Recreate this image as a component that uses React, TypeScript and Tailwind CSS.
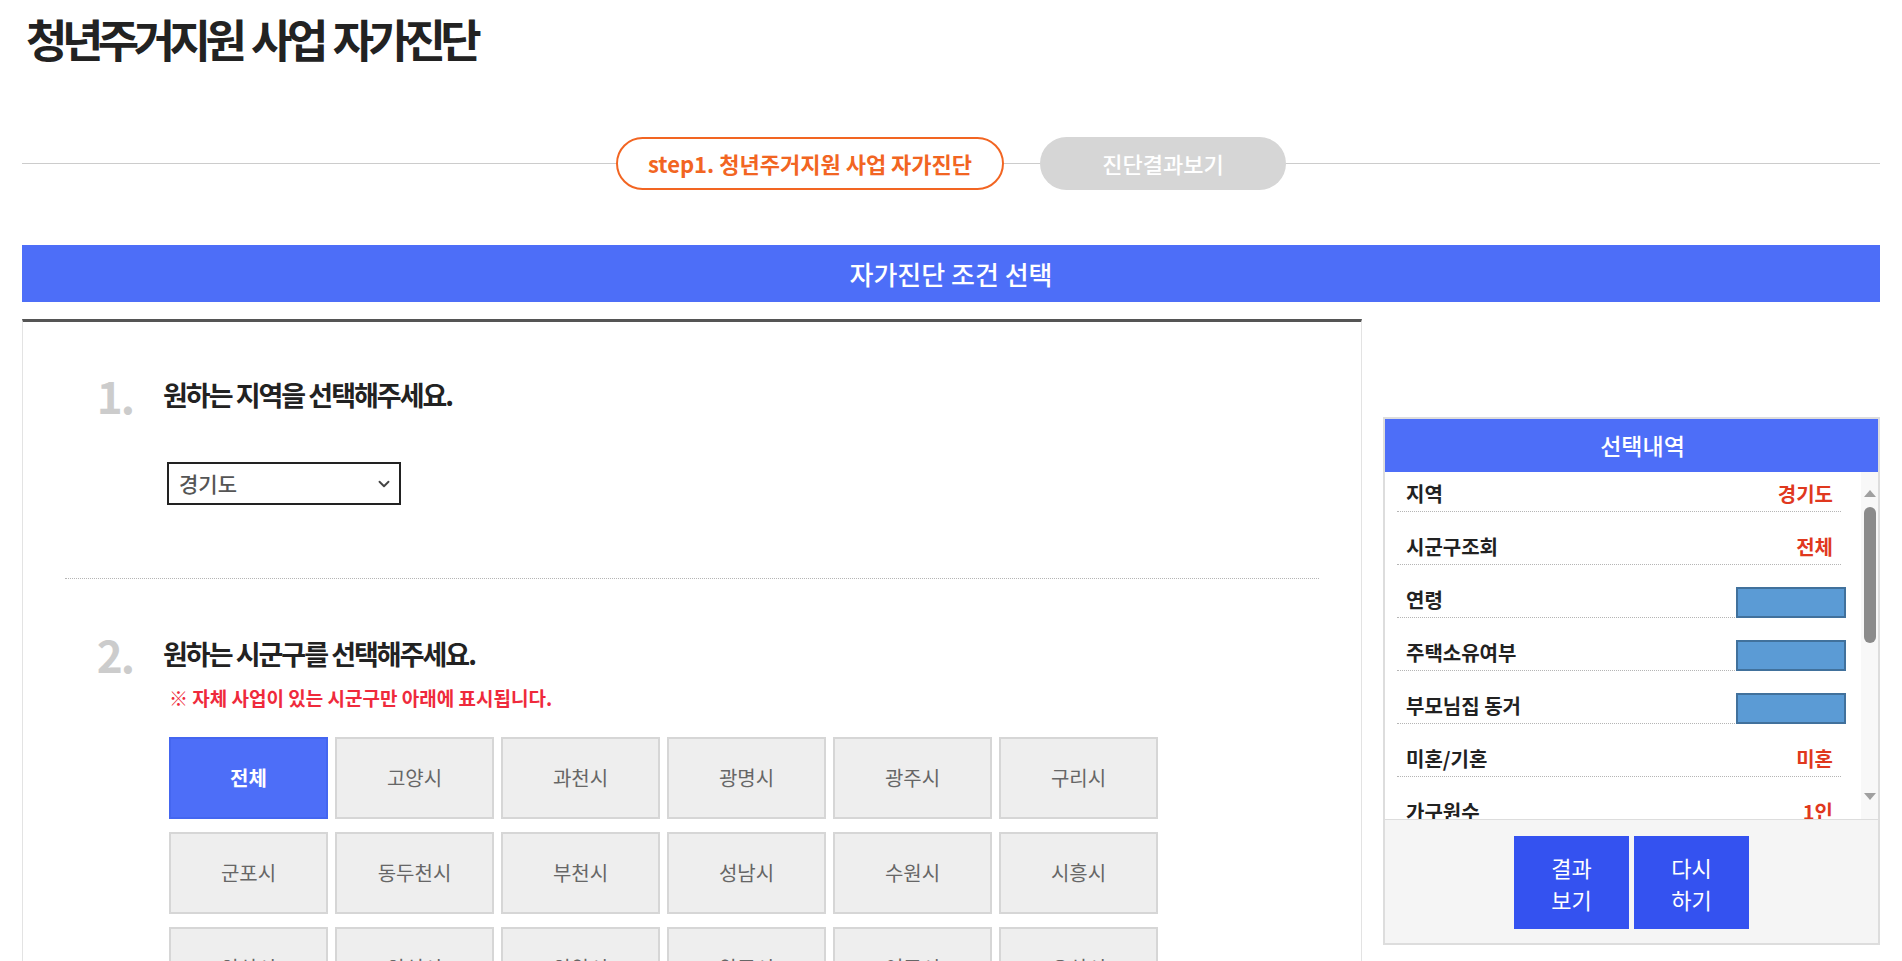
import React from 'react';
import { ChevronDown } from 'lucide-react';

const cities = [
  '전체', '고양시', '과천시', '광명시', '광주시', '구리시',
  '군포시', '동두천시', '부천시', '성남시', '수원시', '시흥시',
  '안산시', '안성시', '안양시', '양주시', '여주시', '오산시',
];

type Row = { label: string; value?: string; box?: boolean };
const rows: Row[] = [
  { label: '지역', value: '경기도' },
  { label: '시군구조회', value: '전체' },
  { label: '연령', box: true },
  { label: '주택소유여부', box: true },
  { label: '부모님집 동거', box: true },
  { label: '미혼/기혼', value: '미혼' },
  { label: '가구원수', value: '1인' },
  { label: '소득', value: '-' },
];

export default function App() {
  return (
    <div className="min-h-screen bg-white text-[#222] font-['Noto_Sans_CJK_KR','Noto_Sans',sans-serif]">
      <div className="px-[22px]">
        {/* Title */}
        <h1 className="pt-[13px] pl-[4px] text-[45px] leading-[52px] font-bold tracking-[-5.5px] [word-spacing:5px] text-[#222]">
          청년주거지원 사업 자가진단
        </h1>

        {/* Steps */}
        <div className="mt-[72px] flex h-[53px] items-center">
          <div className="h-px flex-1 bg-[#cccccc]" />
          <div className="flex h-[53px] w-[388px] items-center justify-center rounded-full border-2 border-[#f26522] bg-white text-[22px] font-bold text-[#f26522]">
            step1. 청년주거지원 사업 자가진단
          </div>
          <div className="h-px w-[36px] bg-[#cccccc]" />
          <div className="flex h-[53px] w-[246px] items-center justify-center rounded-full bg-[#d6d6d6] text-[22px] font-medium text-white">
            진단결과보기
          </div>
          <div className="h-px flex-1 bg-[#cccccc]" />
        </div>

        {/* Blue bar */}
        <div className="mt-[55px] flex h-[57px] items-center justify-center bg-[#4d6ef8] text-[26px] font-medium text-white">
          자가진단 조건 선택
        </div>

        {/* Panels */}
        <div className="mt-[17px] flex items-start gap-[21px]">
          {/* Left panel */}
          <div className="w-[1340px] border-x border-t-[3px] border-x-[#e3e3e3] border-t-[#555555] pb-[60px]">
            {/* Section 1 */}
            <div className="mx-[42px] border-b border-dotted border-[#b5b5b5] pb-[73px] pt-[49px]">
              <div className="flex h-[48px] items-center">
                <div className="w-[68px] text-right text-[44px] font-bold leading-[48px] tracking-[-2px] text-[#cccccc]">1.</div>
                <div className="ml-[30px] text-[27px] font-bold tracking-[-2px] text-[#222]">원하는 지역을 선택해주세요.</div>
              </div>
              <div className="ml-[102px] mt-[43px] flex h-[43px] w-[234px] items-center justify-between border-2 border-[#222] bg-white pl-[10px] pr-[6px]">
                <span className="text-[21px] font-medium text-[#555]">경기도</span>
                <ChevronDown size={18} strokeWidth={2.5} className="text-[#444]" />
              </div>
            </div>

            {/* Section 2 */}
            <div className="mx-[42px] pt-[51px]">
              <div className="flex h-[48px] items-center">
                <div className="w-[68px] text-right text-[44px] font-bold leading-[48px] tracking-[-2px] text-[#cccccc]">2.</div>
                <div className="ml-[30px] text-[27px] font-bold tracking-[-2px] text-[#222]">원하는 시군구를 선택해주세요.</div>
              </div>
              <div className="ml-[104px] mt-[8px] text-[19px] font-bold leading-[24px] text-[#ef2a3c]">
                ※ 자체 사업이 있는 시군구만 아래에 표시됩니다.
              </div>
              <div className="ml-[104px] mt-[27px] grid w-fit grid-cols-[repeat(6,159px)] gap-x-[7px] gap-y-[13px]">
                {cities.map((c, i) =>
                  i === 0 ? (
                    <div key={c} className="flex h-[82px] items-center justify-center border-2 border-[#4466f0] bg-[#4d6ef8] text-[20px] font-bold text-white">
                      {c}
                    </div>
                  ) : (
                    <div key={c} className="flex h-[82px] items-center justify-center border-2 border-[#d6d6d6] bg-[#eeeeee] text-[20px] text-[#666]">
                      {c}
                    </div>
                  )
                )}
              </div>
            </div>
          </div>

          {/* Right panel */}
          <div className="mt-[98px] w-[497px] border-2 border-[#dddddd] bg-white">
            <div className="flex h-[53px] items-center justify-center bg-[#4d6ef8] pl-[22px] text-[23px] font-medium text-white">
              선택내역
            </div>
            <div className="flex h-[347px]">
              <div className="flex-1 overflow-hidden pl-[12px] pr-[20px]">
                {rows.map((r, i) => (
                  <div
                    key={r.label}
                    className={`flex items-end justify-between border-b border-dotted border-[#b5b5b5] pl-[9px] pr-[8px] ${i === 0 ? 'h-[40px]' : 'h-[53px]'}`}
                  >
                    <span className="pb-[3px] text-[20px] font-bold leading-[28px] text-[#222]">{r.label}</span>
                    {r.box ? (
                      <span className="mb-[-1px] mr-[-13px] h-[31px] w-[110px] border-2 border-[#41719c] bg-[#5b9bd5]" />
                    ) : (
                      <span className="pb-[3px] text-[20px] font-bold leading-[28px] text-[#e0381e]">{r.value}</span>
                    )}
                  </div>
                ))}
              </div>
              {/* Scrollbar */}
              <div className="flex w-[17px] flex-col items-center bg-[#f8f8f8]">
                <svg width="12" height="7" viewBox="0 0 12 7" className="mt-[18px]">
                  <path d="M0 7 L6 0 L12 7 Z" fill="#a0a0a0" />
                </svg>
                <div className="mt-[10px] h-[136px] w-[12px] rounded-full bg-[#8b8b8b]" />
                <div className="flex-1" />
                <svg width="12" height="7" viewBox="0 0 12 7" className="mb-[19px]">
                  <path d="M0 0 L12 0 L6 7 Z" fill="#a0a0a0" />
                </svg>
              </div>
            </div>
            <div className="flex justify-center gap-[5px] border-t border-[#dddddd] bg-[#f5f5f5] pb-[14px] pt-[16px]">
              <button className="flex h-[93px] w-[115px] flex-col items-center justify-center bg-[#3452f0] text-[22px] leading-[32px] text-white">
                <span>결과</span>
                <span>보기</span>
              </button>
              <button className="flex h-[93px] w-[115px] flex-col items-center justify-center bg-[#3452f0] text-[22px] leading-[32px] text-white">
                <span>다시</span>
                <span>하기</span>
              </button>
            </div>
          </div>
        </div>
      </div>
    </div>
  );
}
